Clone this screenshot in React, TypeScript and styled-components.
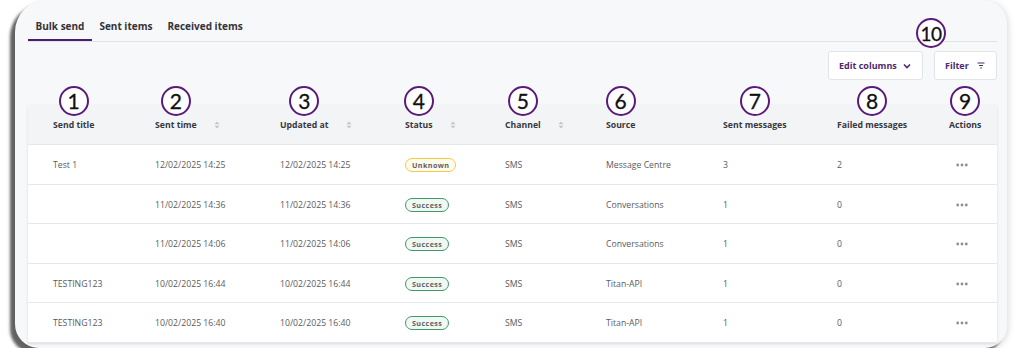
import * as React from 'react';
import styled, { createGlobalStyle } from 'styled-components';

const GlobalStyle = createGlobalStyle`
  html, body {
    margin: 0;
    padding: 0;
    background: #ffffff;
  }
  body {
    font-family: 'Open Sans', 'Liberation Sans', sans-serif;
    overflow: hidden;
  }
`;

const Frame = styled.div`
  box-sizing: border-box;
  margin-left: 15px;
  width: 992px;
  height: 348px;
  padding: 14px 10px 0 13px;
  background: #f7f8fa;
  border-radius: 32px 24px 22px 24px;
  box-shadow: -5px 5px 3px rgba(70, 70, 70, 0.85), 2px 1px 6px rgba(0, 0, 0, 0.12);
`;

const Tabs = styled.div`
  display: flex;
  height: 27px;
  border-bottom: 1px solid #e2e3e7;
`;

const Tab = styled.div<{ $active?: boolean }>`
  padding: 5px 7.5px 6px;
  font-size: 10px;
  line-height: 14px;
  font-weight: 700;
  color: #333338;
  border-bottom: 2px solid ${(p) => (p.$active ? '#4b1f6f' : 'transparent')};
`;

const Toolbar = styled.div`
  display: flex;
  justify-content: flex-end;
  gap: 11px;
  margin-top: 9px;
`;

const Button = styled.div<{ $width: number }>`
  position: relative;
  box-sizing: border-box;
  width: ${(p) => p.$width}px;
  height: 29px;
  display: flex;
  align-items: center;
  justify-content: space-between;
  padding: 0 11px 0 10px;
  background: #ffffff;
  border: 1px solid #e3e4e8;
  border-radius: 3px;
  font-size: 9px;
  font-weight: 700;
  color: #4b2a6f;
`;

const Table = styled.div`
  margin-top: 25px;
  background: #ffffff;
  border-radius: 3px 3px 0 0;
  box-shadow: 0 1px 3px rgba(0, 0, 0, 0.12);
`;

const Row = styled.div<{ $head?: boolean }>`
  display: grid;
  grid-template-columns: 102px 125px 125px 100px 101px 117px 114px 112px 1fr;
  align-items: center;
  padding-left: 25px;
  height: ${(p) => (p.$head ? '39px' : '38.5px')};
  background: ${(p) => (p.$head ? '#f3f4f6' : '#ffffff')};
  border-bottom: 1px solid #e6e7ea;
`;

const HeadCell = styled.div`
  display: flex;
  align-items: center;
  font-size: 8.7px;
  font-weight: 700;
  color: #38383d;
`;

const Label = styled.span`
  position: relative;
  line-height: 12px;
`;

const Marker = styled.span`
  position: absolute;
  box-sizing: border-box;
  width: 30px;
  height: 30px;
  border: 2.4px solid #5a1a7c;
  border-radius: 50%;
  background: #ffffff;
  display: flex;
  align-items: center;
  justify-content: center;
  font-family: 'Lato', 'Liberation Sans', sans-serif;
  font-size: 21px;
  font-weight: 400;
  color: #111111;
  -webkit-text-stroke: 0.3px #111111;
`;

const HeadMarker = styled(Marker)`
  left: 50%;
  bottom: calc(100% + 2.5px);
  transform: translateX(-50%);
`;

const FilterMarker = styled(Marker)`
  left: -19px;
  top: -34px;
  font-size: 19px;
  letter-spacing: -0.5px;
`;

const SortIcon = styled.svg`
  margin-left: 17px;
  flex: none;
`;

const Cell = styled.div`
  display: flex;
  align-items: center;
  padding-top: 2px;
  font-size: 8.7px;
  color: #5a5a5e;
`;

const Badge = styled.span<{ $kind: 'unknown' | 'success' }>`
  display: inline-flex;
  align-items: center;
  height: 14px;
  box-sizing: border-box;
  padding: 0 6px;
  border-radius: 8px;
  border: 1.5px solid ${(p) => (p.$kind === 'unknown' ? '#f2c94c' : '#3f9a6b')};
  background: ${(p) => (p.$kind === 'unknown' ? '#fffbea' : '#eff8f2')};
  font-size: 7.2px;
  font-weight: 700;
  letter-spacing: 0.4px;
  color: #5c5f66;
`;

const Sort = () => (
  <SortIcon width="6" height="8" viewBox="0 0 6 8">
    <path d="M3 0.5 L5.5 3.2 H0.5 Z" fill="#c3c5cb" />
    <path d="M3 7.5 L5.5 4.8 H0.5 Z" fill="#c3c5cb" />
  </SortIcon>
);

const Dots = () => (
  <svg width="12" height="4" viewBox="0 0 12 4" style={{ marginLeft: 7 }}>
    <circle cx="1.7" cy="2" r="1.4" fill="#8b8f98" />
    <circle cx="6" cy="2" r="1.4" fill="#8b8f98" />
    <circle cx="10.3" cy="2" r="1.4" fill="#8b8f98" />
  </svg>
);

const columns = [
  { title: 'Send title', sort: false },
  { title: 'Sent time', sort: true },
  { title: 'Updated at', sort: true },
  { title: 'Status', sort: true },
  { title: 'Channel', sort: true },
  { title: 'Source', sort: false },
  { title: 'Sent messages', sort: false },
  { title: 'Failed messages', sort: false },
  { title: 'Actions', sort: false },
];

type Item = {
  title: string;
  sent: string;
  updated: string;
  status: 'unknown' | 'success';
  source: string;
  sentCount: number;
  failed: number;
};

const rows: Item[] = [
  { title: 'Test 1', sent: '12/02/2025 14:25', updated: '12/02/2025 14:25', status: 'unknown', source: 'Message Centre', sentCount: 3, failed: 2 },
  { title: '', sent: '11/02/2025 14:36', updated: '11/02/2025 14:36', status: 'success', source: 'Conversations', sentCount: 1, failed: 0 },
  { title: '', sent: '11/02/2025 14:06', updated: '11/02/2025 14:06', status: 'success', source: 'Conversations', sentCount: 1, failed: 0 },
  { title: 'TESTING123', sent: '10/02/2025 16:44', updated: '10/02/2025 16:44', status: 'success', source: 'Titan-API', sentCount: 1, failed: 0 },
  { title: 'TESTING123', sent: '10/02/2025 16:40', updated: '10/02/2025 16:40', status: 'success', source: 'Titan-API', sentCount: 1, failed: 0 },
];

const App = () => {
  return (
    <>
      <GlobalStyle />
      <Frame>
        <Tabs>
          <Tab $active>Bulk send</Tab>
          <Tab>Sent items</Tab>
          <Tab>Received items</Tab>
        </Tabs>
        <Toolbar>
          <Button $width={95}>
            Edit columns
            <svg width="8" height="6" viewBox="0 0 8 6">
              <path d="M1 1.5 L4 4.5 L7 1.5" fill="none" stroke="#4b2a6f" strokeWidth="1.6" />
            </svg>
          </Button>
          <Button $width={63}>
            <FilterMarker>10</FilterMarker>
            Filter
            <svg width="8" height="7" viewBox="0 0 8 7">
              <path d="M0.5 1 H7.5 M2 3.5 H6 M3.2 6 H4.8" stroke="#4b2a6f" strokeWidth="1.2" />
            </svg>
          </Button>
        </Toolbar>
        <Table>
          <Row $head>
            {columns.map((c, i) => (
              <HeadCell key={c.title}>
                <Label>
                  <HeadMarker>{i + 1}</HeadMarker>
                  {c.title}
                </Label>
                {c.sort && <Sort />}
              </HeadCell>
            ))}
          </Row>
          {rows.map((r, i) => (
            <Row key={i}>
              <Cell>{r.title}</Cell>
              <Cell>{r.sent}</Cell>
              <Cell>{r.updated}</Cell>
              <Cell>
                <Badge $kind={r.status}>{r.status === 'unknown' ? 'Unknown' : 'Success'}</Badge>
              </Cell>
              <Cell>SMS</Cell>
              <Cell>{r.source}</Cell>
              <Cell>{r.sentCount}</Cell>
              <Cell>{r.failed}</Cell>
              <Cell>
                <Dots />
              </Cell>
            </Row>
          ))}
        </Table>
      </Frame>
    </>
  );
};

export default App;
